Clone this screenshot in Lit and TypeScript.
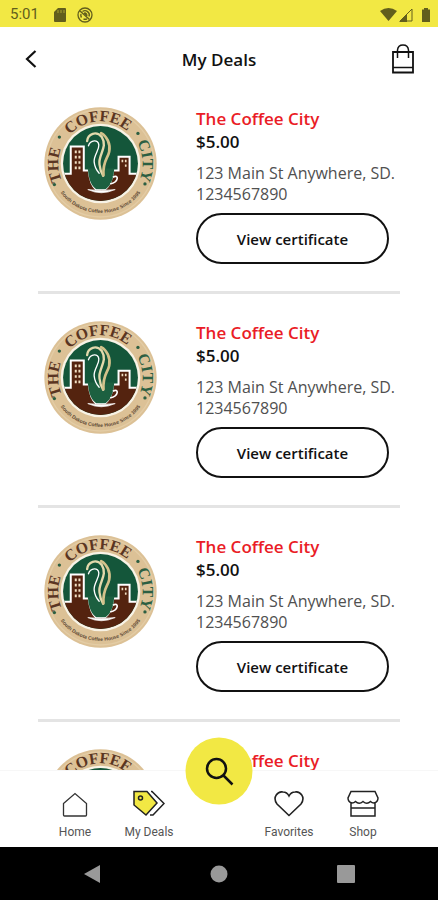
import { LitElement, html, css } from "lit";
import { customElement } from "lit/decorators.js";

@customElement("coffee-logo")
class CoffeeLogo extends LitElement {
  static styles = css`
    :host { display: block; }
    svg { display: block; width: 100%; height: auto; }
    .word { font: 700 47px "Liberation Serif", serif; text-anchor: middle; fill: #5a3522; }
    .city { fill: #2c5f42; }
    .motto { font: 700 15px "Liberation Sans", sans-serif; text-anchor: middle; fill: #5f4a35; }
  `;
  render() {
    return html`
      <svg viewBox="13 18 338 338" role="img" aria-label="The Coffee City">
        <defs>
          <path id="upper" d="M182 313A126 126 0 0 1 182 61A126 126 0 0 1 182 313" />
          <path id="lower" d="M34 187A148 148 0 0 0 330 187" />
          <clipPath id="disc"><circle cx="182" cy="187" r="112" /></clipPath>
        </defs>
        <circle cx="182" cy="187" r="168" fill="#dcc196" />
        <circle cx="182" cy="187" r="160" fill="none" stroke="#e3cca5" stroke-width="4" />
        <circle cx="182" cy="187" r="119" fill="#f8f3e6" />
        <g clip-path="url(#disc)">
          <path d="M60 60H310V320H60Z" fill="#14563a" />
          <path d="M50 218H93V136H132V208H147C150 240 158 256 168 264H196C206 256 217 240 220 208H236V167H269V218H315V320H50Z" fill="#54230f" stroke="#fff" stroke-width="6" />
          <path d="M144 202H223C221 238 211 253 197 264H169C155 253 147 238 144 202Z" fill="#1c6040" />
        </g>
        <path d="M219 228C238 218 237 243 211 248" fill="none" stroke="#fff" stroke-width="5" />
        <path d="M144 265Q184 270 226 265Q184 284 144 265Z" fill="#fff" stroke="#fff" stroke-width="2" />
        <path d="M105 148h6v8h-6zm11 0h6v8h-6zM105 164h6v8h-6zm11 0h6v8h-6zM105 180h6v8h-6zm11 0h6v8h-6zM105 196h6v8h-6zm11 0h6v8h-6zM245 176h5v7h-5zm10 0h5v7h-5zM255 190h5v7h-5z" fill="#f1dfc3" />
        <g fill="none" stroke-linecap="round">
          <path d="M142 120C144 98 170 88 186 108C205 138 174 162 179 190Q181 210 190 224" stroke="#e3d9ac" stroke-width="7" />
          <path d="M146 134C152 116 176 114 177 132C178 148 162 162 163 182Q165 202 178 216" stroke="#fff" stroke-width="4" />
          <path d="M184 96C200 104 213 128 208 152C204 172 188 180 191 222" stroke="#d3c28b" stroke-width="8" />
        </g>
        <text class="word"><textPath href="#upper" startOffset="24.5%">THE</textPath></text>
        <text class="word"><textPath href="#upper" startOffset="49%">COFFEE</textPath></text>
        <text class="word city"><textPath href="#upper" startOffset="74%">CITY</textPath></text>
        <g fill="#2c5f42">
          <circle cx="59" cy="108" r="5" /><circle cx="294" cy="97" r="5" />
          <circle cx="44" cy="250" r="5" /><circle cx="315" cy="248" r="5" />
        </g>
        <text class="motto"><textPath href="#lower" startOffset="50%">South Dakota Coffee House Since 1995</textPath></text>
      </svg>
    `;
  }
}

@customElement("deal-card")
class DealCard extends LitElement {
  static styles = css`
    :host {
      display: grid;
      grid-template-columns: 158px 1fr;
      padding: 27px 0;
      border-bottom: 3px solid #e4e4e4;
      color: #111;
      font-family: "Open Sans", "Noto Sans", sans-serif;
    }
    coffee-logo { width: 113px; margin-left: 6px; }
    .details { white-space: nowrap; }
    h2, p { margin: 0; }
    h2 { font-size: 17px; line-height: 24px; font-weight: 600; color: #ea1c26; }
    .price { font-size: 17px; line-height: 22px; font-weight: 600; }
    .address { margin: 10px 0 8px; font-size: 16px; line-height: 21px; color: #505050; }
    button {
      display: block;
      width: 193px;
      height: 51px;
      padding: 0;
      border: 2px solid #111;
      border-radius: 26px;
      background: #fff;
      color: #111;
      font: 600 15px "Open Sans", "Noto Sans", sans-serif;
    }
  `;
  render() {
    return html`
      <coffee-logo></coffee-logo>
      <div class="details">
        <h2>The Coffee City</h2>
        <p class="price">$5.00</p>
        <p class="address">123 Main St Anywhere, SD.<br />1234567890</p>
        <button type="button">View certificate</button>
      </div>
    `;
  }
}

@customElement("app-root")
class AppRoot extends LitElement {
  static styles = css`
    :host {
      display: flex;
      flex-direction: column;
      height: 100vh;
      background: #fff;
      color: #111;
      font-family: "Open Sans", "Noto Sans", sans-serif;
    }
    svg { display: block; }
    button { padding: 0; border: 0; background: none; color: inherit; }
    .status {
      display: flex;
      align-items: center;
      flex: none;
      height: 27px;
      padding: 2px 7px 0 10px;
      box-sizing: border-box;
      background: #f2e844;
      color: #625e1c;
      font: 15px/25px Roboto, sans-serif;
    }
    .status .left { display: flex; align-items: center; gap: 11px; flex: 1; }
    .status .left span { margin-right: 4px; }
    .status .right { display: flex; align-items: center; gap: 2px; }
    header {
      display: grid;
      grid-template-columns: 40px 1fr 32px;
      align-items: center;
      flex: none;
      height: 38px;
      padding: 14px 19px 0 11px;
    }
    header button { display: grid; place-items: center; height: 38px; }
    h1 { margin: 0; text-align: center; font-size: 17px; line-height: 24px; font-weight: 600; }
    main { flex: 1; min-height: 0; overflow: hidden; padding: 1px 38px 0; }
    .tabs {
      position: relative;
      display: grid;
      grid-template-columns: 74px 74px 1fr 74px 74px;
      flex: none;
      height: 77px;
      padding: 0 38px;
      border-top: 1px solid #f7f7f7;
      box-sizing: border-box;
      background: #fff;
    }
    .tabs a {
      display: flex;
      flex-direction: column;
      align-items: center;
      gap: 3px;
      padding-top: 18px;
      color: #555;
      font: 12px/16px Roboto, sans-serif;
      text-decoration: none;
      white-space: nowrap;
    }
    .search {
      position: absolute;
      left: 50%;
      top: 0;
      display: grid;
      place-items: center;
      width: 67px;
      height: 67px;
      border-radius: 50%;
      background: #f2e844;
      transform: translate(-50%, -50%);
    }
    .home { grid-column: 1; }
    .favorites { grid-column: 4; }
    .system {
      display: flex;
      justify-content: space-between;
      align-items: center;
      flex: none;
      height: 53px;
      padding: 0 83px;
      box-sizing: border-box;
      background: #000;
    }
  `;
  render() {
    return html`
      <div class="status">
        <div class="left">
          <span>5:01</span>
          <svg width="12" height="14" viewBox="0 0 12 14"><path d="M4 0H11Q12 0 12 1V13Q12 14 11 14H1Q0 14 0 13V4Z" fill="currentColor" /><path d="M4 2v3M7 2v3M10 2v3" stroke="#aaa330" /></svg>
          <svg width="16" height="16" viewBox="0 0 16 16" fill="none" stroke="currentColor"><circle cx="8" cy="8" r="7" stroke-width="1.3" /><path d="M4.500 10.500A4.300 4.300 0 0 1 4 7M5.500 4.500A4.300 4.300 0 0 1 12 9.500M10 11.800A4.300 4.300 0 0 1 6.500 12" stroke-width="1.400" /><path d="M3 4L12.500 12.500" stroke-width="1.500" /><path d="M7 6Q10 5 10 9Z" fill="currentColor" /></svg>
        </div>
        <div class="right">
          <svg width="17" height="13" viewBox="0 0 17 13"><path d="M0 3Q8.500 -3 17 3L8.500 13Z" fill="currentColor" /></svg>
          <svg width="14" height="14" viewBox="0 0 14 14"><path d="M13 1V13H1Z" fill="none" stroke="currentColor" /><path d="M0 14L8 6V14Z" fill="currentColor" /></svg>
          <svg width="16" height="14" viewBox="0 0 16 14"><path d="M7 1.500H9V0H13V1.500H15V14H7Z" fill="currentColor" /></svg>
        </div>
      </div>
      <header>
        <button type="button" aria-label="Back">
          <svg width="12" height="20" viewBox="0 0 12 20" fill="none" stroke="#111" stroke-width="2.200"><path d="M10.500 1L2 9L10.500 17" /></svg>
        </button>
        <h1>My Deals</h1>
        <button type="button" aria-label="Bag">
          <svg width="24" height="32" viewBox="0 0 24 32" fill="none" stroke="#111"><path d="M2 8H22V28.500H2Z" stroke-width="1.800" /><path d="M2 23.500H22" stroke-width="1.500" /><path d="M6.500 14V6Q7 0.900 12 0.900T17.500 6V14" stroke-width="1.500" /></svg>
        </button>
      </header>
      <main>
        ${[0, 1, 2, 3].map(() => html`<deal-card></deal-card>`)}
      </main>
      <nav class="tabs" aria-label="Main">
        <a class="home" href="#home">
          <svg width="32" height="32" viewBox="0 0 32 32" fill="none" stroke="#333" stroke-width="1.300"><path d="M4.500 14.500L16 4.500L27.500 14.500V26Q27.500 27 26.500 27H5.500Q4.500 27 4.500 26Z" /></svg>
          Home
        </a>
        <a href="#deals">
          <svg width="32" height="32" viewBox="0 0 32 32" fill="none" stroke="#222" stroke-width="1.500"><path d="M1 2.500H14L24 14L13 26L1 16Z" fill="#f2e844" /><circle cx="7.500" cy="9" r="2" /><path d="M18 2.500H19L31 14.500L20 26H17" /></svg>
          My Deals
        </a>
        <a class="favorites" href="#favorites">
          <svg width="32" height="32" viewBox="0 0 32 32" fill="none" stroke="#222" stroke-width="1.600"><path d="M16 26.500L4 15C-1 8 5 2 10 3Q14 3 16 7Q18 3 22 3C27 2 33 8 28 15Z" /></svg>
          Favorites
        </a>
        <a href="#shop">
          <svg width="32" height="32" viewBox="0 0 32 32" fill="none" stroke="#222" stroke-width="1.500"><path d="M4 2.500H28L31 9Q31 13 27 14Q25 14 23.500 12.500Q20 16 16 12.500Q12 16 8.500 12.500Q7 14 5 14Q1 13 1 9ZM4 14V27H28V14M4 19H28" /></svg>
          Shop
        </a>
        <button class="search" type="button" aria-label="Search">
          <svg width="32" height="32" viewBox="0 0 32 32" fill="none" stroke="#111" stroke-width="2.500"><circle cx="13" cy="13" r="9.500" /><path d="M20 20L29 29" /></svg>
        </button>
      </nav>
      <div class="system">
        <svg width="18" height="20" viewBox="0 0 18 20"><path d="M17 1V19L1 10Z" fill="#999" /></svg>
        <svg width="18" height="18" viewBox="0 0 18 18"><circle cx="9" cy="9" r="8.500" fill="#999" /></svg>
        <svg width="18" height="18" viewBox="0 0 18 18"><rect width="18" height="18" rx="1" fill="#999" /></svg>
      </div>
    `;
  }
}
